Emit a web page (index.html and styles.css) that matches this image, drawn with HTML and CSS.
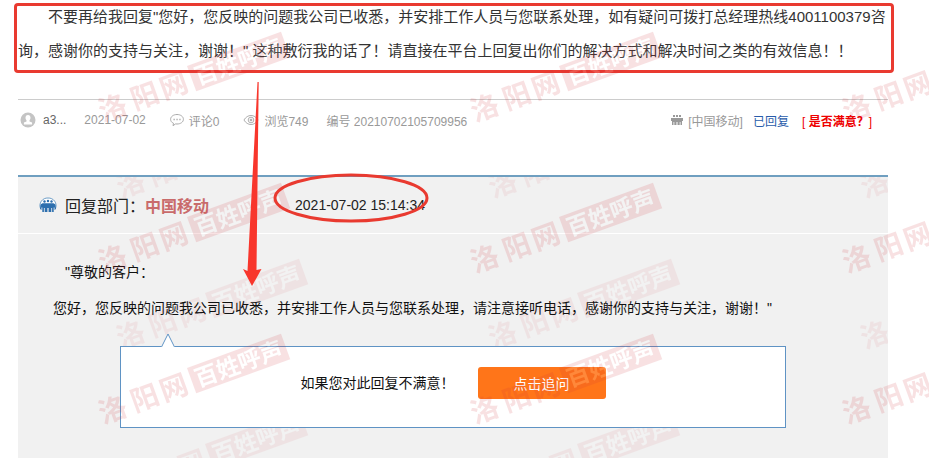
FILE: index.html
```html
<!DOCTYPE html>
<html lang="zh-CN">
<head>
    <meta charset="UTF-8">
    <meta name="viewport" content="width=device-width, initial-scale=1.0">
    <title>百姓呼声 - 洛阳网</title>
    <link rel="stylesheet" href="styles.css">
</head>
<body>
    <div class="page">
        <div class="post">
            <p class="post-text">不要再给我回复"您好，您反映的问题我公司已收悉，并安排工作人员与您联系处理，如有疑问可拨打总经理热线4001100379咨询，感谢你的支持与关注，谢谢！" 这种敷衍我的话了！请直接在平台上回复出你们的解决方式和解决时间之类的有效信息！！</p>
        </div>

        <div class="meta">
            <span class="meta-item user">
                <svg width="16" height="16" viewBox="0 0 16 16">
                    <circle cx="8" cy="8" r="7.5" fill="#c4c4c4"/>
                    <path d="M8 3c1.700 0 2.500 1.200 2.500 2.700 0 1.200-.5 2-1 2.600v1.200l2.600 1v2H3.900v-2l2.600-1V8.300c-.5-.6-1-1.400-1-2.600C5.500 4.200 6.300 3 8 3z" fill="#fff"/>
                </svg>
                a3...
            </span>
            <span class="meta-item date">2021-07-02</span>
            <span class="meta-item comments">
                <svg width="14" height="14" viewBox="0 0 14 14" fill="none" stroke="#aaa">
                    <path d="M3.500 10.300C1.600 9.500.6 8 .6 6.300.6 3.600 3.400 1.500 7 1.500s6.400 2.100 6.400 4.800S10.600 11 7 11c-.5 0-1 0-1.400-.1L3 12.700z"/>
                    <path d="M3.500 6.500h1.300M6.400 6.500h1.300M9.300 6.500h1.300" stroke-width="1.300"/>
                </svg>
                评论0
            </span>
            <span class="meta-item views">
                <svg width="16" height="12" viewBox="0 0 17 12" fill="none" stroke="#aaa">
                    <path d="M1 6c2-3.200 4.600-4.800 7.500-4.800S14 2.800 16 6c-2 3.200-4.600 4.800-7.500 4.800S3 9.200 1 6z"/>
                    <circle cx="8.500" cy="6" r="3"/>
                    <circle cx="8.500" cy="6" r="1" fill="#aaa"/>
                </svg>
                浏览749
            </span>
            <span class="meta-item">编号 20210702105709956</span>
            <div class="status">
                <span class="meta-item dept">
                    <svg width="12" height="12" viewBox="0 0 12 12" fill="#999">
                        <path d="M2 1h2v2H2zM5 1h2v2H5zM8 1h2v2H8zM0 4h12v3h-1v4H9.500V8h-.8v3H7V8h-.5v3h-1V8H5v3H3.300V8h-.8v3H1V7H0z"/>
                    </svg>
                    [中国移动]
                </span>
                <a href="#reply" class="replied">已回复</a>
                <a href="#rate" class="rate">[ <b>是否满意？</b>]</a>
            </div>
        </div>

        <div class="reply" id="reply">
            <svg class="watermark faint" aria-hidden="true">
                <defs>
                    <pattern id="stamp-reply" href="#stamp" x="84" y="75"/>
                </defs>
                <rect width="100%" height="100%" fill="url(#stamp-reply)"/>
            </svg>
            <div class="reply-head">
                <svg class="dept-icon" width="18" height="16" viewBox="0 0 18 16">
                    <path d="M1.500 11.500A7.600 7.600 0 0 1 9 1a7.600 7.600 0 0 1 7.500 10.500" fill="#fff" stroke="#6f9fc8"/>
                    <g fill="#2d6fae">
                        <circle cx="5.500" cy="4.500" r="1.200"/>
                        <circle cx="9" cy="4" r="1.200"/>
                        <circle cx="12.500" cy="4.500" r="1.200"/>
                        <path d="M1.500 7.500l2-1.200h11l2 1.200.5 4.500-1.500 1v-2.500h-.8V15h-1.600v-4h-.8v4h-2.700v-4H8.400v4H5.700v-4h-.8v4H3.300v-4.500h-.8V13L1 12z"/>
                    </g>
                </svg>
                <span class="dept-label">回复部门：</span>
                <strong class="dept-name">中国移动</strong>
                <span class="reply-time">2021-07-02 15:14:34</span>
            </div>
            <div class="reply-body">
                <p class="greeting">"尊敬的客户：</p>
                <p>您好，您反映的问题我公司已收悉，并安排工作人员与您联系处理，请注意接听电话，感谢你的支持与关注，谢谢！"</p>
                <div class="ask-box">
                    <svg class="notch" width="14" height="15" viewBox="0 0 14 15">
                        <path d="M0 14L7 1l7 13v1H0z" fill="#fff"/>
                        <path d="M.5 14L7 1l6.500 13" fill="none" stroke="#5f93c4"/>
                    </svg>
                    <span>如果您对此回复不满意！</span>
                    <button type="button" class="ask-btn">点击追问</button>
                </div>
            </div>
        </div>

        <svg class="watermark" aria-hidden="true">
            <defs>
                <pattern id="stamp" x="84" y="25" width="372" height="151" patternUnits="userSpaceOnUse">
                    <g class="stamp">
                        <text class="stamp-site" transform="translate(19 97) rotate(-20)">
                            <tspan x="0" y="0">洛</tspan><tspan x="34" y="0">阳</tspan><tspan x="65" y="0">网</tspan>
                        </text>
                        <g transform="translate(103 41) rotate(-20)">
                            <rect width="100" height="27"/>
                            <text class="stamp-name" x="4" y="22">百姓呼声</text>
                        </g>
                    </g>
                </pattern>
            </defs>
            <rect width="100%" height="100%" fill="url(#stamp)"/>
        </svg>

        <!-- 标注 -->
        <svg class="marks" width="440" height="300" viewBox="0 0 440 300" aria-hidden="true">
            <ellipse cx="351" cy="198" rx="76" ry="23" fill="none" stroke="#e93a30" stroke-width="3"/>
            <path d="M257.500 82h1.200L256.500 270l5-1L252 286l-9-17 4.500 2z" fill="#f8362c"/>
        </svg>
    </div>
</body>
</html>
```

FILE: styles.css
```css
body {
    margin: 0;
    background: #fff;
    color: #222;
    font-family: "Liberation Sans", "Noto Sans CJK SC", sans-serif;
    font-size: 14px;
}
p {
    margin: 0;
}
a {
    text-decoration: none;
}
.page {
    position: relative;
    padding: 0 41px 13px 18px;
    overflow: hidden;
}
.post {
    position: relative;
    padding-bottom: 31px;
    border-bottom: 1px solid #ccc;
}
.post::after {
    content: "";
    position: absolute;
    top: 3px;
    left: -4px;
    right: -6px;
    height: 64px;
    border: 3px solid #e93a30;
    border-radius: 4px;
}
.post-text {
    font-size: 15px;
    line-height: 34px;
    text-indent: 30px;
    color: #333;
}
.meta {
    display: flex;
    align-items: center;
    height: 40px;
    padding: 0 16px 0 2px;
    margin-bottom: 35px;
    font-size: 12px;
    color: #999;
    white-space: nowrap;
}
.meta-item {
    display: flex;
    align-items: center;
    gap: 5px;
    margin-right: 18px;
}
.user {
    gap: 7px;
    color: #666;
}
.date,
.comments {
    margin-right: 24px;
}
.status {
    display: flex;
    align-items: center;
    margin-left: auto;
}
.dept {
    margin-right: 10px;
}
.replied {
    margin-right: 13px;
    color: #2a5caa;
}
.rate {
    color: #e00;
}
.reply {
    position: relative;
    border-top: 2px solid #6f9fc0;
    background: #f1f1f1;
}
.reply-head {
    position: relative;
    display: flex;
    align-items: center;
    height: 56px;
    padding-left: 21px;
    border-bottom: 1px solid #fff;
}
.dept-icon {
    margin-right: 8px;
}
.dept-label,
.dept-name {
    font-size: 16px;
}
.dept-name {
    margin-right: 86px;
    color: #c96b6b;
}
.reply-body {
    position: relative;
    padding: 20px 35px 30px;
    line-height: 36px;
    color: #111;
}
.greeting {
    text-indent: 12px;
}
.ask-box {
    position: relative;
    display: flex;
    align-items: center;
    justify-content: center;
    gap: 23px;
    height: 72px;
    padding-bottom: 8px;
    margin: 20px 67px 0;
    border: 1px solid #5f93c4;
    background: #fff;
}
.notch {
    position: absolute;
    left: 40px;
    top: -14px;
}
.ask-btn {
    width: 128px;
    height: 32px;
    padding: 0;
    border: none;
    border-radius: 3px;
    background: #ff7519;
    color: #fff;
    font-family: inherit;
    font-size: 14px;
    cursor: pointer;
}
.watermark {
    position: absolute;
    top: 0;
    left: 0;
    width: 100%;
    height: 100%;
    opacity: 0.14;
    pointer-events: none;
}
.faint {
    opacity: 0.07;
}
.stamp {
    fill: #d2303a;
}
.stamp-site {
    font-family: "Noto Sans CJK SC", sans-serif;
    font-size: 28px;
    font-weight: bold;
}
.stamp-name {
    fill: #fff;
    font-family: "Noto Sans CJK SC", sans-serif;
    font-size: 23px;
    font-weight: bold;
}
.marks {
    position: absolute;
    top: 0;
    left: 0;
    pointer-events: none;
}
```
